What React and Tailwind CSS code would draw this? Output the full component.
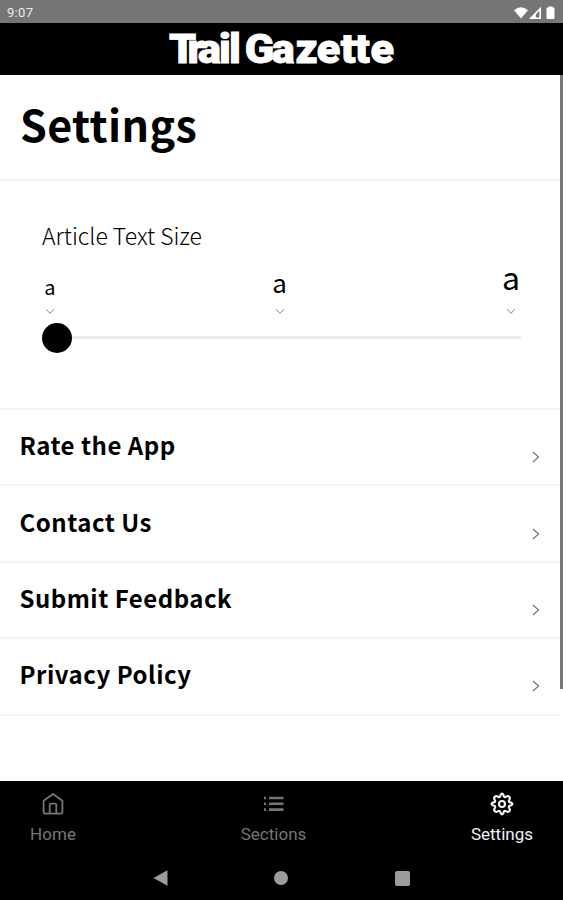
import React, { useState } from "react";

const links = ["Rate the App", "Contact Us", "Submit Feedback", "Privacy Policy"];

const sizes = [
  { id: "small", className: "w-4 text-[20px] leading-[20px] pb-[10px]" },
  { id: "medium", className: "w-4 text-[26px] leading-[26px] pb-[12px]" },
  { id: "large", className: "w-5 text-[32px] leading-[32px] pb-[15px]" },
];

function Chevron({ className }) {
  return (
    <svg viewBox="0 0 10 12" fill="none" stroke="currentColor" strokeWidth="1.2" className={className}>
      <path d="M2 1 L7.5 6 L2 11" />
    </svg>
  );
}

function StatusBar() {
  return (
    <div className="flex h-[23px] shrink-0 items-center justify-between bg-[#757575] pl-[7px] pr-[6px] pt-[2px] text-white">
      <span className="font-[Roboto] text-[13px] leading-none tracking-[0.3px] text-[#ededed]">9:07</span>
      <svg width="44" height="14" viewBox="0 0 44 14" fill="white">
        <path d="M1 4.2 Q8 -1.8 15 4.2 L8 12.4 Z" />
        <path fillRule="evenodd" d="M16 13 L28 0.8 V13 Z M22.8 11.6 H26.4 V4.8 L22.8 8.4 Z" />
        <path d="M35.5 1.5 V0.5 H39.5 V1.5 H40.5 Q41.5 1.5 41.5 2.5 V12 Q41.5 13 40.5 13 H34.5 Q33.5 13 33.5 12 V2.5 Q33.5 1.5 34.5 1.5 Z" />
      </svg>
    </div>
  );
}

function Header() {
  return (
    <header className="flex h-[52px] shrink-0 items-center justify-center bg-black">
      <svg width="233" height="52" viewBox="0 0 233 52" role="img" aria-label="Trail Gazette">
        {/* hand-set kerning for the wordmark */}
        <text
          x="3.8 21.2 31 50.8 60 68 75 100.2 122.6 142.5 165 178.5 193"
          y="39.8"
          transform="scale(1.065 1)"
          fill="#fff"
          stroke="#fff"
          strokeWidth="0.9"
          className="font-[Roboto] text-[40.5px] font-black"
        >
          Trail Gazette
        </text>
      </svg>
    </header>
  );
}

function TextSize() {
  const [size, setSize] = useState("small");

  return (
    <section className="h-[229px] shrink-0 border-b-2 border-[#f5f5f5] pl-[42px] pr-[39px] pt-[38px]">
      <h2 className="text-[23px] font-light leading-[32px]">Article Text Size</h2>
      <div className="flex h-[65px] items-end justify-between">
        {sizes.map((item) => (
          <button
            key={item.id}
            onClick={() => setSize(item.id)}
            className="flex flex-col items-center"
          >
            <span className={item.className}>a</span>
            <Chevron className="h-[9px] w-[8px] rotate-90 text-[#777]" />
          </button>
        ))}
      </div>
      <div data-size={size} className="mt-[6.5px] flex h-[30px] items-center">
        <div className="size-[30px] rounded-full bg-black" />
        <div className="h-[3px] flex-1 bg-[#ebebeb]" />
      </div>
    </section>
  );
}

function HomeIcon() {
  return (
    <svg width="22" height="22" viewBox="0 0 22 22" fill="none" stroke="currentColor" strokeWidth="1.8" strokeLinejoin="round">
      <path d="M1.6 7.7 L11 1 L20.4 7.7 V19 Q20.4 20.6 18.8 20.6 H3.2 Q1.6 20.6 1.6 19 Z" />
      <path d="M7.7 20.4 V11.8 Q7.7 10.6 8.9 10.6 H13.1 Q14.3 10.6 14.3 11.8 V20.4" />
    </svg>
  );
}

function ListIcon() {
  return (
    <svg width="20" height="16" viewBox="0 0 20 16" fill="currentColor">
      <path d="M0 0.7 H2 V3.3 H0 Z M5 0.7 H19.5 V3.3 H5 Z M0 6.5 H2 V9.1 H0 Z M5 6.5 H19.5 V9.1 H5 Z M0 12.3 H2 V14.9 H0 Z M5 12.3 H19.5 V14.9 H5 Z" />
    </svg>
  );
}

function GearIcon() {
  return (
    <svg width="24" height="24" viewBox="0 0 24 24" fill="none" stroke="currentColor" strokeWidth="2.2" strokeLinejoin="round">
      <path d="M12 1.5 Q13.6 2 13.9 4.6 Q14.6 5.4 15.6 5 Q17.6 3.4 19.2 4.8 Q20.6 6.4 19 8.4 Q18.6 9.4 19.4 10.1 Q22 10.4 22.5 12 Q22 13.6 19.4 13.9 Q18.6 14.6 19 15.6 Q20.6 17.6 19.2 19.2 Q17.6 20.6 15.6 19 Q14.6 18.6 13.9 19.4 Q13.6 22 12 22.5 Q10.4 22 10.1 19.4 Q9.4 18.6 8.4 19 Q6.4 20.6 4.8 19.2 Q3.4 17.6 5 15.6 Q5.4 14.6 4.6 13.9 Q2 13.6 1.5 12 Q2 10.4 4.6 10.1 Q5.4 9.4 5 8.4 Q3.4 6.4 4.8 4.8 Q6.4 3.4 8.4 5 Q9.4 5.4 10.1 4.6 Q10.4 2 12 1.5 Z" />
      <circle cx="12" cy="12" r="3" />
    </svg>
  );
}

function TabBar() {
  return (
    <nav className="flex h-[73px] justify-between px-[30px] pt-[11px] font-[Roboto] text-[17px] leading-[20px] text-[#757575]">
      <a className="flex flex-col items-center">
        <span className="flex h-6 items-center"><HomeIcon /></span>
        <span className="mt-[8px] tracking-[0.1px]">Home</span>
      </a>
      <a className="flex flex-col items-center">
        <span className="flex h-6 items-center"><ListIcon /></span>
        <span className="mt-[8px]">Sections</span>
      </a>
      <a className="flex flex-col items-center text-[#f2f2f2]">
        <span className="flex h-6 items-center"><GearIcon /></span>
        <span className="mt-[8px]">Settings</span>
      </a>
    </nav>
  );
}

function SystemNav() {
  return (
    <div className="flex h-[48px] items-center justify-between pl-[153px] pr-[153.5px] text-[#9c9c9c]">
      <svg width="15" height="16" viewBox="0 0 15 16" fill="currentColor"><path d="M0.5 8 L14.5 0.3 V15.7 Z" /></svg>
      <div className="size-[14px] rounded-full bg-current" />
      <div className="size-[15px] rounded-[2px] bg-current" />
    </div>
  );
}

export default function App() {
  return (
    <div className="flex h-[900px] w-[563px] flex-col overflow-hidden bg-white font-['Noto_Sans_CJK_SC',sans-serif] text-black">
      <StatusBar />
      <Header />
      <div className="flex h-[706px] shrink-0">
        <main className="flex w-[560px] flex-col">
          <div className="h-[106px] shrink-0 border-b-2 border-[#f5f5f5] pl-5 pt-[20px]">
            <h1 className="text-[43px] font-bold leading-[56px] tracking-[0.4px]">Settings</h1>
          </div>
          <TextSize />
          {links.map((label) => (
            <a key={label} className="flex h-[76.4px] shrink-0 justify-between border-b-2 border-[#f5f5f5] pl-[19.5px] pr-[19px] pt-[19.2px]">
              <span className="text-[24px] font-bold leading-[32px] tracking-[0.5px]">{label}</span>
              <Chevron className="mt-[22px] h-[12px] w-[10px] text-[#777]" />
            </a>
          ))}
        </main>
        <div className="h-[614px] w-[3px] bg-[#777]" />
      </div>
      <footer className="h-[119px] shrink-0 bg-black">
        <TabBar />
        <SystemNav />
      </footer>
    </div>
  );
}
